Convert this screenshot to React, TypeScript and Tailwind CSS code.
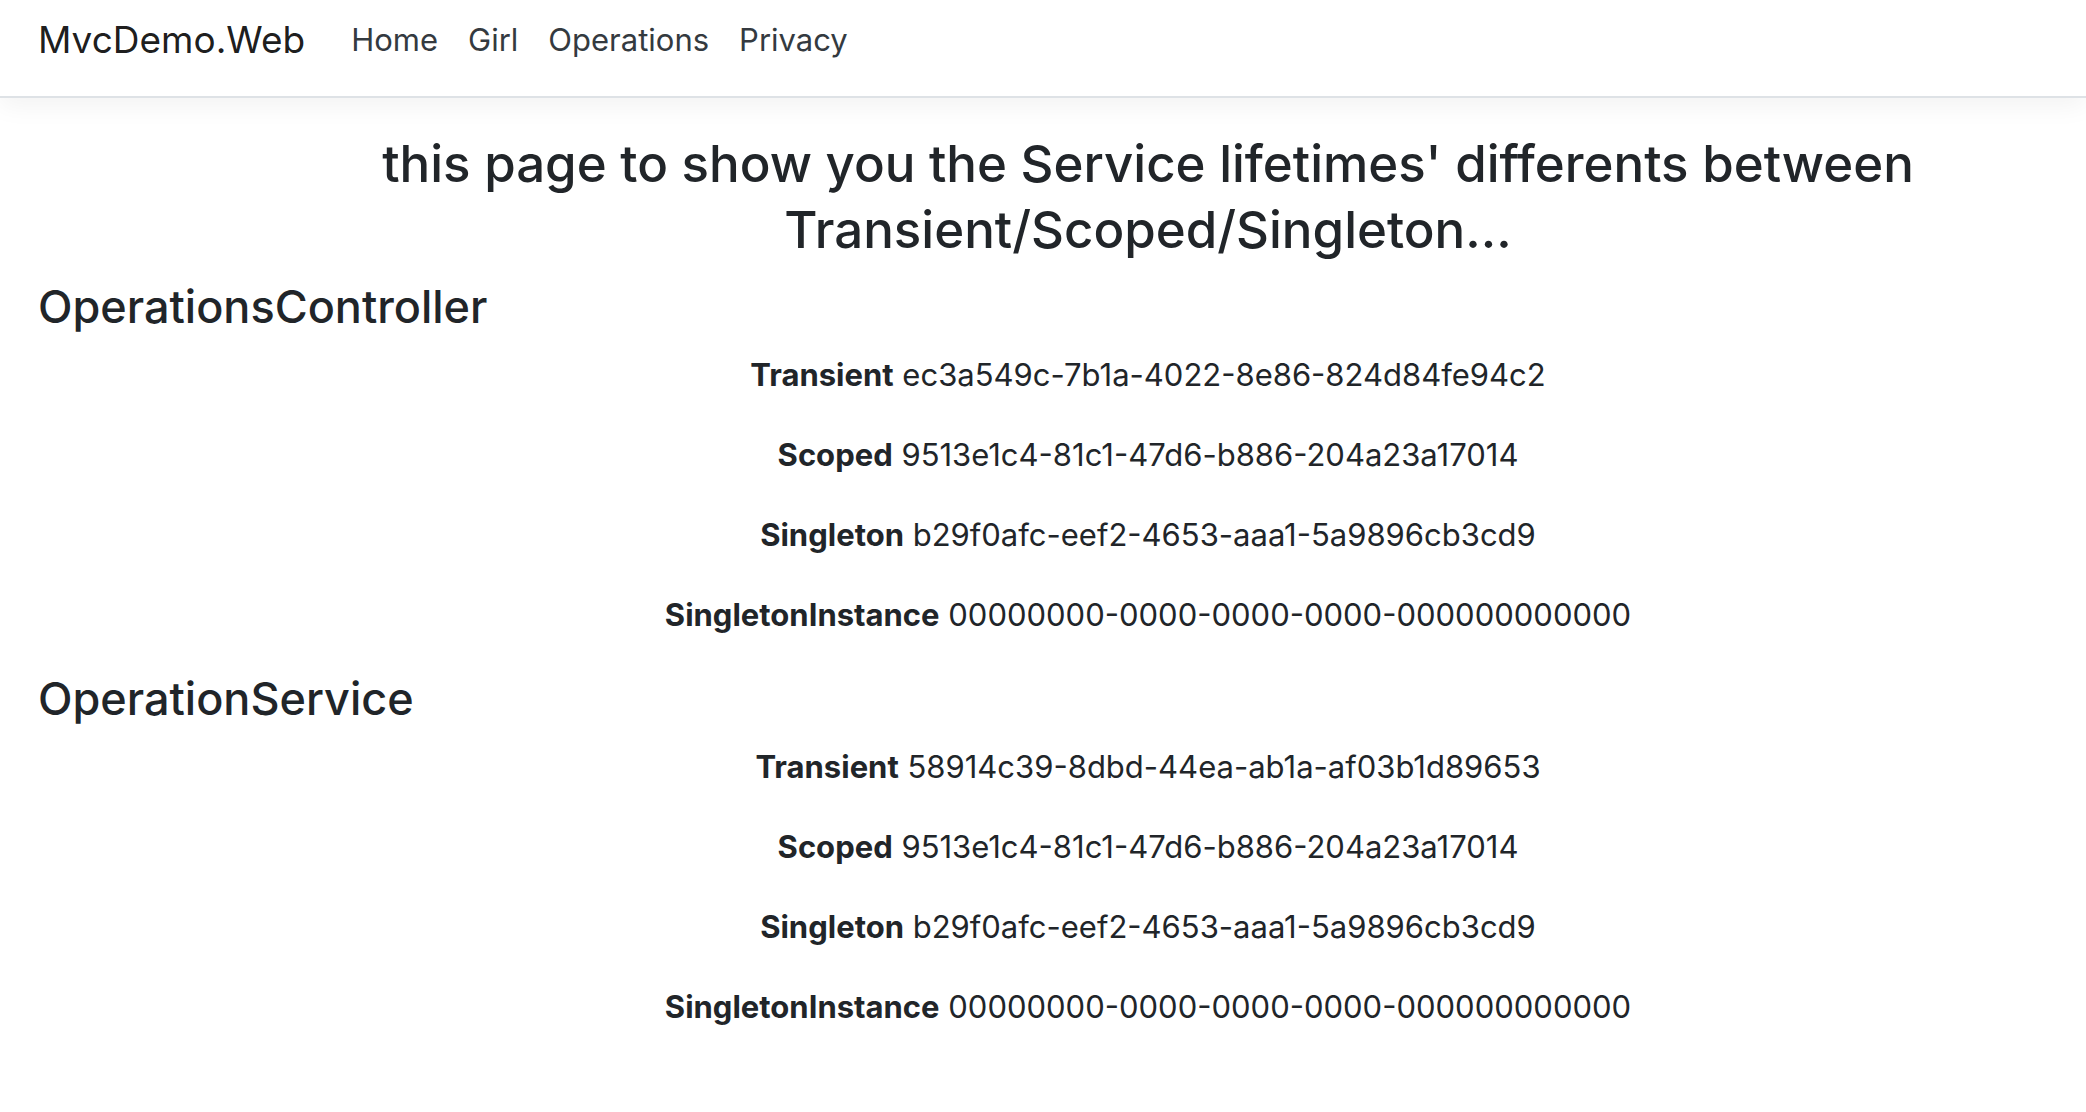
const navLinks = ["Home", "Girl", "Operations", "Privacy"];

type Operation = { name: string; id: string };

const controllerOperations: Operation[] = [
  { name: "Transient", id: "ec3a549c-7b1a-4022-8e86-824d84fe94c2" },
  { name: "Scoped", id: "9513e1c4-81c1-47d6-b886-204a23a17014" },
  { name: "Singleton", id: "b29f0afc-eef2-4653-aaa1-5a9896cb3cd9" },
  { name: "SingletonInstance", id: "00000000-0000-0000-0000-000000000000" },
];

const serviceOperations: Operation[] = [
  { name: "Transient", id: "58914c39-8dbd-44ea-ab1a-af03b1d89653" },
  { name: "Scoped", id: "9513e1c4-81c1-47d6-b886-204a23a17014" },
  { name: "Singleton", id: "b29f0afc-eef2-4653-aaa1-5a9896cb3cd9" },
  { name: "SingletonInstance", id: "00000000-0000-0000-0000-000000000000" },
];

function OperationSection({ title, operations }: { title: string; operations: Operation[] }) {
  return (
    <section>
      <h2 className="mb-4 text-[45px] leading-14 font-medium">{title}</h2>
      <dl className="pl-[172px] text-center text-[31px] leading-12">
        {operations.map(({ name, id }) => (
          <div key={name} className="mb-8">
            <dt className="inline font-bold">{name}</dt> <dd className="inline">{id}</dd>
          </div>
        ))}
      </dl>
    </section>
  );
}

export default function App() {
  return (
    <div className="min-h-screen bg-white font-['Inter',sans-serif] text-[#212529]">
      <header className="border-b-2 border-[#dee2e6] pt-2 pb-6 shadow-[0_8px_24px_rgba(0,0,0,0.05)]">
        <nav className="flex items-center px-[38px]">
          <a href="#" className="mr-[46px] text-[37px] leading-16 text-black/90">MvcDemo.Web</a>
          <ul className="flex gap-[30px] text-[31px] leading-16 text-[#343a40]">
            {navLinks.map((label) => (
              <li key={label}>
                <a href="#">{label}</a>
              </li>
            ))}
          </ul>
        </nav>
      </header>
      <main className="pt-[33px] pl-[38px]">
        <h1 className="mb-4 pl-[172px] text-center text-[51px] leading-[66px] font-medium">
          this page to show you the Service lifetimes' differents between Transient/Scoped/Singleton...
        </h1>
        <OperationSection title="OperationsController" operations={controllerOperations} />
        <OperationSection title="OperationService" operations={serviceOperations} />
      </main>
    </div>
  );
}
